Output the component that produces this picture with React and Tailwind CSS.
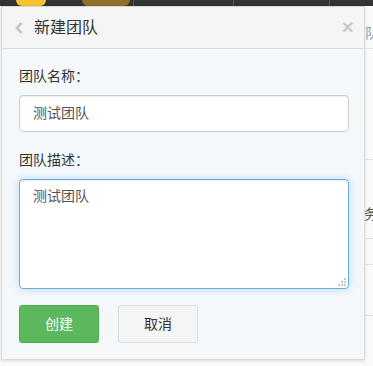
import React from "react";

const font = { fontFamily: '"Liberation Sans", "Noto Sans CJK SC", sans-serif' };

// page behind the modal: dark nav strip and a table whose right edge peeks out
const Background = () => (
  <div className="absolute inset-0 flex flex-col bg-[#fafafa]">
    <div className="h-[6px] flex bg-[#333333] overflow-hidden">
      <div className="w-[16px]" />
      <div className="w-[30px] bg-[#f5c431] rounded-b-[6px]" />
      <div className="w-[36px]" />
      <div className="w-[48px] bg-[#8e6f2c] rounded-b-full" />
      <div className="w-[3px]" />
      <div className="w-[100px] border-l border-[#555]" />
      <div className="w-[96px] border-l border-[#555]" />
      <div className="flex-1 border-l border-[#555]" />
    </div>
    <div className="flex-1 flex justify-end">
      <div className="w-[9px] flex flex-col text-[14px] text-[#555] overflow-hidden">
        <div className="h-[43px] border-b border-[#e3e3e3] flex items-start pt-[17px] text-[#8a9ab0] pl-[1px]">队</div>
        <div className="h-[111px] border-b border-[#e3e3e3]" />
        <div className="h-[79px] border-b border-[#e3e3e3] flex items-end pb-[13px]">务</div>
        <div className="h-[26px] border-b border-[#e3e3e3]" />
        <div className="h-[51px] border-b border-[#e3e3e3]" />
      </div>
    </div>
  </div>
);

export default function App() {
  return (
    <div className="relative w-[373px] h-[366px] overflow-hidden" style={font}>
      <Background />
      {/* modal dialog */}
      <div className="absolute left-[1px] top-[6px] w-[364px] h-[354px] border border-[#d9d9d9] bg-[#f5f8fb] shadow-[0_1px_3px_rgba(0,0,0,0.12)] flex flex-col">
        <div className="h-[42px] flex items-center bg-[#f5f5f5] border-b border-[#dcdcdc] px-[12px]">
          <svg width="10" height="14" viewBox="0 0 10 14" className="mr-[10px]">
            <path d="M7.5 2 L3 7 L7.5 12" fill="none" stroke="#c4c4c4" strokeWidth="2.6" />
          </svg>
          <span className="text-[16px] text-[#333]">新建团队</span>
          <span className="ml-auto mr-[-2px] text-[16px] font-bold text-[#c8c8c8] leading-none">✕</span>
        </div>
        <div className="flex-1 px-[17px] pt-[17px]">
          <div className="text-[14px] text-[#333] leading-[20px]">团队名称：</div>
          <div className="mt-[9px] h-[37px] w-[330px] rounded-[4px] border border-[#cccccc] bg-white flex items-center px-[13px] text-[14px] text-[#555] shadow-[inset_0_1px_1px_rgba(0,0,0,0.075)]">
            测试团队
          </div>
          <div className="mt-[18px] text-[14px] text-[#333] leading-[20px]">团队描述：</div>
          <div className="relative mt-[9px] h-[110px] w-[330px] rounded-[4px] border border-[#66afe9] bg-white px-[13px] pt-[6px] text-[14px] text-[#555] shadow-[inset_0_1px_1px_rgba(0,0,0,0.075),0_0_8px_rgba(102,175,233,0.4)]">
            测试团队
            <svg width="9" height="9" viewBox="0 0 9 9" className="absolute right-[1px] bottom-[1px]">
              <rect x="6" y="0" width="2" height="2" fill="#c8c8c8" />
              <rect x="3" y="3" width="2" height="2" fill="#c8c8c8" />
              <rect x="6" y="3" width="2" height="2" fill="#c8c8c8" />
              <rect x="0" y="6" width="2" height="2" fill="#c8c8c8" />
              <rect x="3" y="6" width="2" height="2" fill="#c8c8c8" />
              <rect x="6" y="6" width="2" height="2" fill="#c8c8c8" />
            </svg>
          </div>
          <div className="mt-[16px] flex gap-[19px]">
            <button className="w-[80px] h-[38px] rounded-[3px] bg-[#5cb85c] border border-[#4cae4c] text-white text-[14px]">
              创建
            </button>
            <button className="w-[80px] h-[38px] rounded-[3px] bg-[#f5f5f5] border border-[#dddddd] text-[#333] text-[14px]">
              取消
            </button>
          </div>
        </div>
      </div>
    </div>
  );
}
